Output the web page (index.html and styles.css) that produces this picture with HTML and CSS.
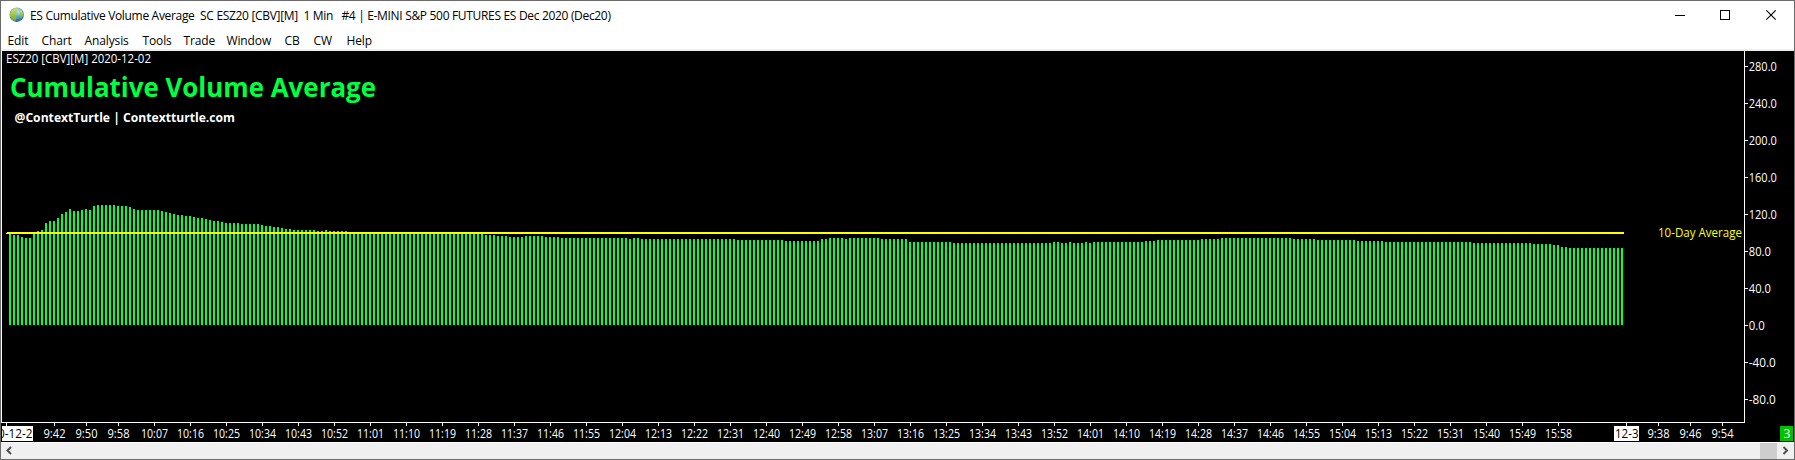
FILE: index.html
```html
<!DOCTYPE html>
<html lang="en">
<head>
<meta charset="utf-8">
<title>ES Cumulative Volume Average</title>
<link rel="stylesheet" href="styles.css">
</head>
<body>
<div class="window">
  <header class="titlebar">
    <svg class="app-icon" width="16" height="16" viewBox="0 0 16 16">
      <defs>
        <radialGradient id="sea" cx="0.6" cy="0.3" r="0.75">
          <stop offset="0" stop-color="#b9e4f8"/><stop offset="0.45" stop-color="#5aa6dc"/><stop offset="1" stop-color="#1c4c8e"/>
        </radialGradient>
        <linearGradient id="land" x1="0" y1="0" x2="0" y2="1">
          <stop offset="0" stop-color="#cfe468"/><stop offset="1" stop-color="#6fab2f"/>
        </linearGradient>
      </defs>
      <circle cx="7.8" cy="7.7" r="7.2" fill="url(#sea)"/>
      <path d="M1 6Q2.500 1.200 7.500 1L9 2L7.500 4.500L8 6.500L6.500 8.500L8 10.500L6.500 14Q2.500 13.500 1 9.500Z" fill="url(#land)"/>
      <path d="M11 3L13.200 4.800L14.400 8L12.500 11L11 9.500L10.500 6Z" fill="url(#land)"/>
    </svg>
    <h1 class="caption">ES Cumulative Volume Average  SC ESZ20 [CBV][M]  1 Min   #4 | E-MINI S&amp;P 500 FUTURES ES Dec 2020 (Dec20)</h1>
    <div class="controls">
      <svg class="minimize" width="11" height="11" shape-rendering="crispEdges"><rect y="5" width="10" height="1"/></svg>
      <svg width="11" height="11"><rect x="0.5" y="0.5" width="9" height="9" fill="none" stroke="#000"/></svg>
      <svg width="11" height="11"><path d="M0.300 0.300L9.700 9.700M9.700 0.300L0.300 9.700" fill="none" stroke="#000" stroke-width="1.100"/></svg>
    </div>
  </header>
  <nav class="menu">
    <span>Edit</span><span>Chart</span><span>Analysis</span><span>Tools</span><span>Trade</span><span>Window</span><span>CB</span><span>CW</span><span>Help</span>
  </nav>
  <svg class="chart" id="chart" width="1793" height="391" viewBox="1 51 1793 391">
    <rect class="edge" x="1" y="51" width="1" height="372"/>
    <g id="bars" class="bars"></g>
    <path class="average" d="M7 232H1624V234H6V233H7Z"/>
    <g id="axes" class="axes">
      <rect x="1" y="422" width="1744" height="1"/>
      <rect x="1744" y="51" width="1" height="372"/>
    </g>
    <rect class="date-box" x="2" y="426" width="31" height="15"/>
    <rect class="date-box" x="1614" y="426" width="25" height="15"/>
    <rect class="count-box" x="1780" y="426" width="13" height="15"/>
    <g id="labels" class="labels">
      <text x="6" y="63" textLength="145" lengthAdjust="spacingAndGlyphs">ESZ20 [CBV][M] 2020-12-02</text>
      <text class="big" x="10" y="97" textLength="366" lengthAdjust="spacingAndGlyphs">Cumulative Volume Average</text>
      <text class="handle" x="14.5" y="122" textLength="220.5" lengthAdjust="spacingAndGlyphs">@ContextTurtle | Contextturtle.com</text>
      <text class="yellow" x="1658" y="237" textLength="84" lengthAdjust="spacingAndGlyphs">10-Day Average</text>
      <svg x="2" y="426" width="31" height="15"><text class="dark" x="-4" y="12" textLength="34.500" lengthAdjust="spacingAndGlyphs">0-12-2</text></svg>
      <text class="dark" x="1615" y="438" textLength="23.500" lengthAdjust="spacingAndGlyphs">12-3</text>
      <text x="1783.500" y="438">3</text>
    </g>
  </svg>
  <footer class="scrollbar">
    <svg class="arrow" width="17" height="16"><path d="M10 4L6.500 7.500L10 11"/></svg>
    <div class="track"><div class="thumb"></div></div>
    <svg class="arrow" width="17" height="16"><path d="M6.500 4L10 7.500L6.500 11"/></svg>
  </footer>
</div>
<script src="chart.js"></script>
</body>
</html>
```
FILE: chart.js
```js
const NS = "http://www.w3.org/2000/svg";
const byId = (id) => document.getElementById(id);

function add(parent, tag, attrs, text) {
  const el = document.createElementNS(NS, tag);
  for (const key in attrs) el.setAttribute(key, attrs[key]);
  if (text) el.textContent = text;
  parent.appendChild(el);
}

// Bar tops, run-length encoded as [top, count]; one bar per minute.
const runs = [
  [233,1],[235,2],[237,1],[238,2],[233,1],[231,1],[230,1],[223,1],[221,2],[218,1],[214,1],[212,1],[209,1],
  [211,2],[210,1],[209,1],[210,1],[206,1],[205,5],[206,3],[207,1],[209,1],[210,6],[211,1],[212,1],[213,1],
  [214,1],[215,2],[216,2],[217,1],[218,2],[219,1],[220,1],[221,2],[222,1],[223,4],[224,5],[225,1],[226,2],
  [227,2],[228,1],[229,2],[230,6],[231,2],[230,1],[231,5],[233,34],[235,3],[236,3],[237,4],[236,5],[237,4],
  [238,17],[239,1],[238,2],[239,24],[240,12],[241,9],[239,2],[238,4],[239,1],[238,8],[239,7],[242,11],
  [243,25],[242,2],[243,2],[242,1],[243,3],[242,1],[243,1],[242,13],[241,3],[240,11],[239,5],[238,18],
  [239,6],[240,10],[241,7],[242,22],[243,15],[244,5],[245,2],[247,2],[248,14]
];
let x = 9;
for (const [top, count] of runs) {
  for (let i = 0; i < count; i++, x += 4) {
    add(byId("bars"), "rect", { x, y: top, width: 2, height: 325 - top });
  }
}

// Price scale
for (let value = 280, y = 66; value >= -80; value -= 40, y += 37) {
  add(byId("axes"), "rect", { x: 1745, y, width: 3, height: 1 });
  const text = value.toFixed(1);
  const width = { 3: 16, 4: 22, 5: 28 }[text.length] - (value < 0 ? 1 : 0);
  add(byId("labels"), "text", { x: 1748.8, y: y + 5, textLength: width, lengthAdjust: "spacingAndGlyphs" }, text);
}

// Time scale
const times = [["", 6], ["9:42", 54], ["9:50", 86], ["9:58", 118]];
for (let i = 0; i < 40; i++) {
  const t = 607 + i * 9;
  times.push([Math.floor(t / 60) + ":" + String(t % 60).padStart(2, "0"), 154 + i * 36]);
}
times.push(["", 1626], ["9:38", 1658], ["9:46", 1690], ["9:54", 1722]);
for (const [text, tx] of times) {
  add(byId("axes"), "rect", { x: tx, y: 423, width: 1, height: 3 });
  if (text) {
    add(byId("labels"), "text", { x: tx + 0.5, y: 438, "text-anchor": "middle",
      textLength: text.length === 5 ? 27 : 22, lengthAdjust: "spacingAndGlyphs" }, text);
  }
}
```
FILE: styles.css
```css
body {
  margin: 0;
  background: #fff;
  font-family: "Open Sans", "Noto Sans", sans-serif;
}
.window {
  box-sizing: border-box;
  width: 1795px;
  height: 460px;
  border: 1px solid #6b6b6b;
  display: flex;
  flex-direction: column;
  overflow: hidden;
}
.titlebar {
  height: 28px;
  display: flex;
  align-items: flex-start;
  padding-left: 8px;
}
.app-icon { margin: 6px 5px 0 0; }
.caption {
  margin: 6px 0 0;
  font-size: 12px;
  font-weight: 400;
  line-height: 17px;
  white-space: pre;
  letter-spacing: -0.32px;
}
.controls {
  display: flex;
  gap: 35px;
  margin: 9px 17px 0 auto;
}
.minimize { margin-right: -1px; }
.menu {
  height: 20px;
  display: grid;
  grid-template-columns: 34px 43px 58px 41px 43px 58px 29px 33px 40px;
  padding-left: 6.5px;
  font-size: 12px;
  line-height: 24px;
  letter-spacing: -0.12px;
  white-space: nowrap;
}
.chart {
  display: block;
  flex: none;
  background: #000;
  border-top: 2px solid #f0f0f0;
  shape-rendering: crispEdges;
}
.edge, .axes, .date-box { fill: #fff; }
.bars { fill: #00ff40; }
.average { fill: #ff0; }
.count-box { fill: #00c000; }
.labels { fill: #fff; font-size: 12px; }
.labels .dark { fill: #000; }
.labels .yellow { fill: #ff0; }
.labels .big { fill: #00ff40; font-size: 26.5px; font-weight: 700; }
.labels .handle { font-size: 12.5px; font-weight: 700; }
.scrollbar {
  display: flex;
  height: 16px;
  border-top: 1px solid #fff;
  background: #f0f0f0;
}
.track { flex: 1; display: flex; justify-content: flex-end; }
.thumb { width: 17px; background: #cdcdcd; }
.arrow path { fill: none; stroke: #505050; stroke-width: 2; }
```
